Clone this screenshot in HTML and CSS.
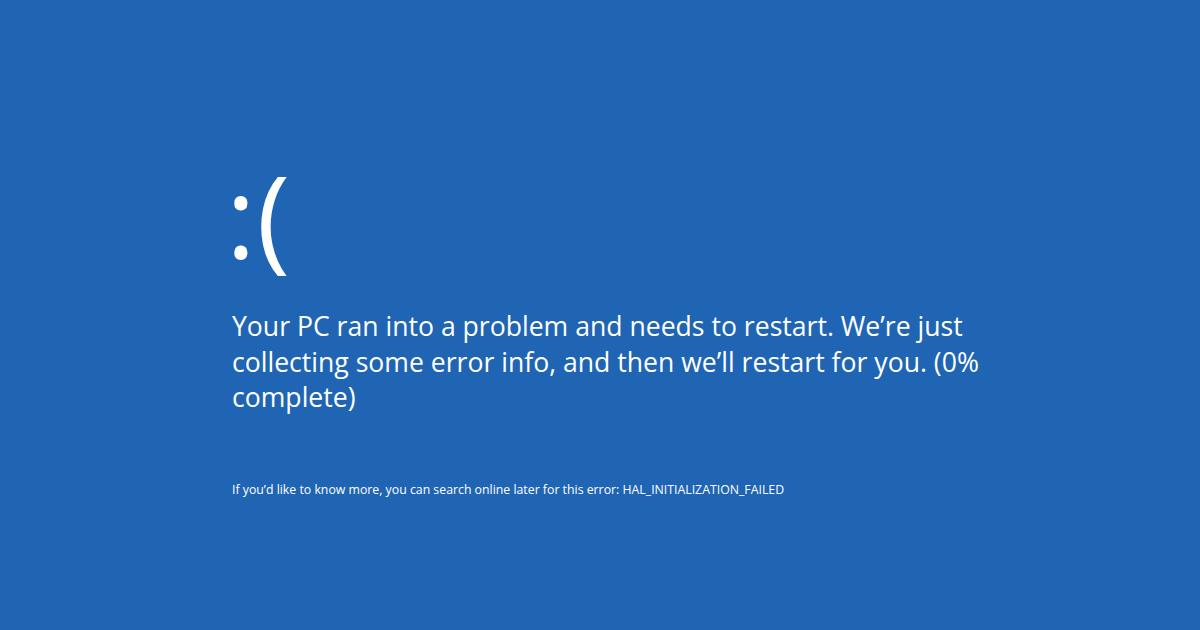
FILE: index.html
```html
<!DOCTYPE html>
<html>
<head>
<meta charset="utf-8">
<link rel="stylesheet" href="styles.css">
</head>
<body>
<main class="screen">
  <div class="face">:(</div>
  <p class="message">Your PC ran into a problem and needs to restart. We’re just collecting some error info, and then we’ll restart for you. (0% complete)</p>
  <p class="info">If you’d like to know more, you can search online later for this error: HAL_INITIALIZATION_FAILED</p>
</main>
</body>
</html>
```
FILE: styles.css
```css
html, body {
  margin: 0;
  padding: 0;
  width: 1200px;
  height: 630px;
  overflow: hidden;
  background: #1f65b4;
}
.screen {
  display: flex;
  flex-direction: column;
  padding: 146px 0 0 232px;
  color: #ffffff;
  font-family: "Open Sans", "Noto Sans", sans-serif;
}
.face {
  font-size: 113px;
  line-height: 130px;
  font-weight: 400;
  margin: 3px 0 -3px -6px;
  letter-spacing: 1px;
}
.message {
  margin: 33px 0 0 0;
  width: 780px;
  font-size: 26.6px;
  line-height: 35.5px;
  font-weight: 400;
}
.info {
  margin: 65px 0 0 0;
  font-size: 12.3px;
  line-height: 18px;
}
```
